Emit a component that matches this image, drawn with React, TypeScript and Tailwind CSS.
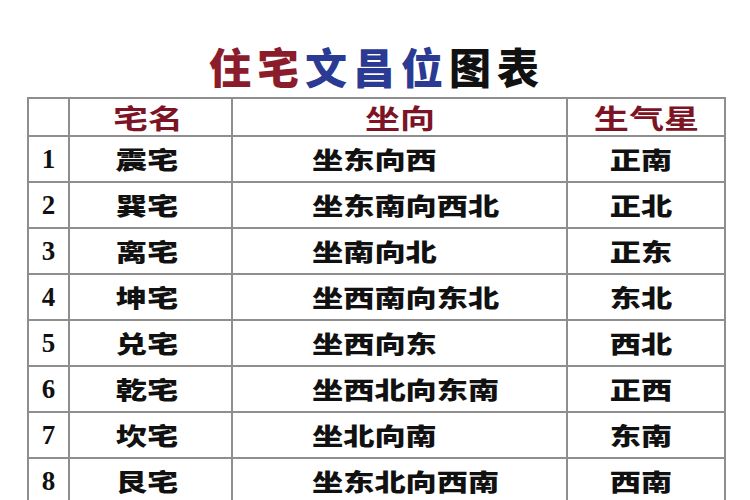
import React from "react";

const rows = [
  { n: "1", name: "震宅", dir: "坐东向西", star: "正南" },
  { n: "2", name: "巽宅", dir: "坐东南向西北", star: "正北" },
  { n: "3", name: "离宅", dir: "坐南向北", star: "正东" },
  { n: "4", name: "坤宅", dir: "坐西南向东北", star: "东北" },
  { n: "5", name: "兑宅", dir: "坐西向东", star: "西北" },
  { n: "6", name: "乾宅", dir: "坐西北向东南", star: "正西" },
  { n: "7", name: "坎宅", dir: "坐北向南", star: "东南" },
  { n: "8", name: "艮宅", dir: "坐东北向西南", star: "西南" },
];

const cjk = "font-['Noto_Sans_CJK_SC',sans-serif]";

function Wide({ children, origin = "origin-center" }: { children: React.ReactNode; origin?: string }) {
  return <span className={`inline-block scale-x-[1.3] ${origin}`}>{children}</span>;
}

export default function App() {
  return (
    <div className={`h-[500px] w-[750px] overflow-hidden bg-white ${cjk}`}>
      <h1 className="flex h-[97px] items-end justify-center pb-[8px] pl-[4px] text-[42px] font-black leading-[46px] tracking-[6px]">
        <span className="text-[#8b1c2c]">住宅</span>
        <span className="text-[#2b3a92]">文昌位</span>
        <span className="text-[#111]">图表</span>
      </h1>
      <table className="ml-[27px] table-fixed border-collapse border-2 border-[#8e8e8e]">
        <colgroup>
          <col className="w-[41px]" />
          <col className="w-[163px]" />
          <col className="w-[335px]" />
          <col className="w-[158px]" />
        </colgroup>
        <thead>
          <tr className="h-[38px] text-[27px] font-black leading-none text-[#7c1426]">
            <th className="border-2 border-[#8e8e8e]"></th>
            <th className="border-2 border-[#8e8e8e] pr-[6px] text-center">
              <Wide>宅名</Wide>
            </th>
            <th className="border-2 border-[#8e8e8e] text-center">
              <Wide>坐向</Wide>
            </th>
            <th className="border-2 border-[#8e8e8e] text-center">
              <Wide>生气星</Wide>
            </th>
          </tr>
        </thead>
        <tbody>
          {rows.map((r) => (
            <tr key={r.n} className="h-[46px] text-[24px] font-black leading-none text-[#111]">
              <td className="border-2 border-[#8e8e8e] text-center font-['Liberation_Serif',serif] text-[27px] font-bold">
                {r.n}
              </td>
              <td className="border-2 border-[#8e8e8e] pr-[8px] text-center">
                <Wide>{r.name}</Wide>
              </td>
              <td className="border-2 border-[#8e8e8e] pl-[79px] text-left">
                <Wide origin="origin-left">{r.dir}</Wide>
              </td>
              <td className="border-2 border-[#8e8e8e] pr-[10px] text-center">
                <Wide>{r.star}</Wide>
              </td>
            </tr>
          ))}
        </tbody>
      </table>
    </div>
  );
}
